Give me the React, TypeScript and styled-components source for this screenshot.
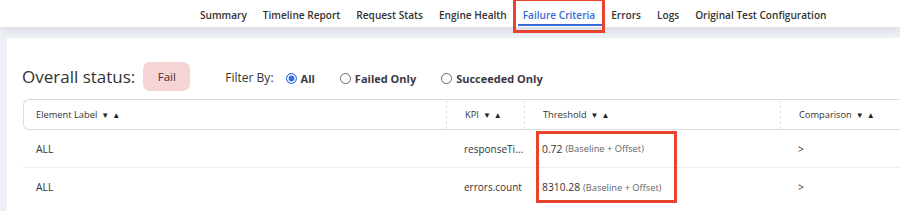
import React from "react";
import styled, { createGlobalStyle, css } from "styled-components";

const Global = createGlobalStyle`
  html, body { margin: 0; padding: 0; }
  body {
    background: #eef0f6;
    font-family: "Open Sans", "Liberation Sans", sans-serif;
    color: #333;
    overflow: hidden;
    width: 900px;
    height: 211px;
  }
`;

const Page = styled.div`
  width: 900px;
  height: 211px;
  overflow: hidden;
  display: flex;
  flex-direction: column;
`;

const Nav = styled.nav`
  height: 27px;
  flex: none;
  background: #fff;
  display: flex;
  align-items: center;
  gap: 16px;
  padding-left: 200px;
  box-shadow: 0 3px 9px rgba(120, 130, 160, 0.18);
  position: relative;
  z-index: 1;
`;

const NavItem = styled.span<{ $active?: boolean }>`
  position: relative;
  font-size: 10.1px;
  line-height: 16px;
  font-weight: 600;
  color: #333;
  white-space: nowrap;
  padding-top: 2px;
  ${(p) =>
    p.$active &&
    css`
      color: #3b6cd6;
      &::after {
        content: "";
        position: absolute;
        left: -5px;
        right: -7px;
        bottom: -3px;
        height: 2px;
        background: #3b6cd6;
      }
      &::before {
        content: "";
        position: absolute;
        left: -10px;
        right: -10px;
        top: -7px;
        bottom: -10px;
        border: 3px solid #e8432d;
        z-index: 2;
      }
    `}
`;

const Panel = styled.main`
  margin: 11px 0 0 7px;
  background: #fff;
  flex: 1;
  padding: 24px 0 0 15px;
  min-width: 1100px;
`;

const StatusRow = styled.div`
  display: flex;
  align-items: center;
  height: 29px;
`;

const StatusTitle = styled.h2`
  margin: 0 8px 0 0;
  font-size: 17px;
  font-weight: 400;
  color: #333;
  line-height: 24px;
`;

const Badge = styled.span`
  width: 47px;
  height: 29px;
  border-radius: 7px;
  background: #f4d4d5;
  color: #4e2c2e;
  font-size: 11.5px;
  display: flex;
  align-items: center;
  justify-content: center;
`;

const FilterLabel = styled.span`
  margin-left: 35px;
  font-size: 12px;
  color: #333;
  padding-top: 2px;
`;

const RadioGroup = styled.div`
  display: flex;
  align-items: center;
  gap: 25px;
  margin-left: 12px;
  padding-top: 3px;
`;

const RadioOption = styled.label`
  display: flex;
  align-items: center;
  gap: 4px;
  font-size: 11px;
  font-weight: 700;
  color: #3a3a44;
`;

const RadioDot = styled.span<{ $checked?: boolean }>`
  width: 11px;
  height: 11px;
  box-sizing: border-box;
  border-radius: 50%;
  ${(p) =>
    p.$checked
      ? css`
          background: #2f6fe4;
          border: 1px solid #2f6fe4;
          box-shadow: inset 0 0 0 1.6px #fff;
        `
      : css`
          background: #fff;
          border: 1px solid #666;
        `}
`;

const Table = styled.div`
  margin: 8px 0 0 1px;
  position: relative;
`;

const cols = "422px 78px 256px 1fr";

const HeaderRow = styled.div`
  display: grid;
  grid-template-columns: ${cols};
  height: 31px;
  box-sizing: border-box;
  border: 1px solid #d6dbe7;
  border-radius: 6px 0 0 6px;
  border-right: none;
`;

const HeaderCell = styled.div<{ $first?: boolean }>`
  display: flex;
  align-items: center;
  gap: 4px;
  padding-left: ${(p) => (p.$first ? "12px" : "18px")};
  font-size: 9.3px;
  color: #333;
  border-left: ${(p) => (p.$first ? "none" : "1px dashed #e0e3ea")};
`;

const SortArrows = styled.span`
  font-size: 8px;
  letter-spacing: 3px;
  color: #222;
`;

const Row = styled.div<{ $last?: boolean }>`
  display: grid;
  grid-template-columns: ${cols};
  height: 38px;
  box-sizing: border-box;
  border-bottom: ${(p) => (p.$last ? "none" : "1px solid #eceef2")};
`;

const Cell = styled.div<{ $first?: boolean }>`
  display: flex;
  align-items: center;
  padding-left: ${(p) => (p.$first ? "13px" : "19px")};
  font-size: 10.3px;
  color: #333;
  white-space: nowrap;
`;

const KpiText = styled.span`
  font-size: 10px;
  white-space: nowrap;
`;

const Note = styled.span`
  font-size: 9.3px;
  color: #666;
  margin-left: 3px;
`;

const Highlight = styled.div`
  position: absolute;
  left: 513px;
  top: 32px;
  width: 141px;
  height: 72px;
  box-sizing: border-box;
  border: 3px solid #e8432d;
  pointer-events: none;
`;

const navItems = [
  "Summary",
  "Timeline Report",
  "Request Stats",
  "Engine Health",
  "Failure Criteria",
  "Errors",
  "Logs",
  "Original Test Configuration",
];

const rows = [
  { label: "ALL", kpi: "responseTi...", value: "0.72", cmp: ">" },
  { label: "ALL", kpi: "errors.count", value: "8310.28", cmp: ">" },
];

const headers = ["Element Label", "KPI", "Threshold", "Comparison"];

export default function App() {
  return (
    <>
      <Global />
      <Page>
        <Nav>
          {navItems.map((n) => (
            <NavItem key={n} $active={n === "Failure Criteria"}>
              {n}
            </NavItem>
          ))}
        </Nav>
        <Panel>
          <StatusRow>
            <StatusTitle>Overall status:</StatusTitle>
            <Badge>Fail</Badge>
            <FilterLabel>Filter By:</FilterLabel>
            <RadioGroup>
              <RadioOption>
                <RadioDot $checked />
                All
              </RadioOption>
              <RadioOption>
                <RadioDot />
                Failed Only
              </RadioOption>
              <RadioOption>
                <RadioDot />
                Succeeded Only
              </RadioOption>
            </RadioGroup>
          </StatusRow>
          <Table>
            <HeaderRow>
              {headers.map((h, i) => (
                <HeaderCell key={h} $first={i === 0}>
                  {h}
                  <SortArrows>▼▲</SortArrows>
                </HeaderCell>
              ))}
            </HeaderRow>
            {rows.map((r, i) => (
              <Row key={i} $last={i === rows.length - 1}>
                <Cell $first>{r.label}</Cell>
                <Cell>
                  <KpiText>{r.kpi}</KpiText>
                </Cell>
                <Cell>
                  {r.value}
                  <Note>(Baseline + Offset)</Note>
                </Cell>
                <Cell>{r.cmp}</Cell>
              </Row>
            ))}
            <Highlight />
          </Table>
        </Panel>
      </Page>
    </>
  );
}
